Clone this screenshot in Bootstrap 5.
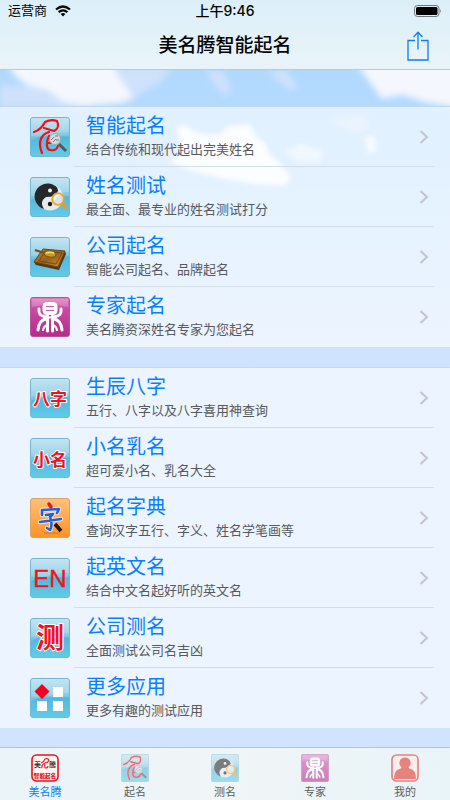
<!DOCTYPE html>
<html lang="zh-CN">
<head>
<meta charset="utf-8">
<meta name="viewport" content="width=device-width, initial-scale=1">
<title>美名腾智能起名</title>
<link href="https://cdn.jsdelivr.net/npm/bootstrap@5.3.0/dist/css/bootstrap.min.css" rel="stylesheet">
<style>
  body {
    font-family: "Liberation Sans", "Noto Sans CJK SC", sans-serif;
    background: linear-gradient(#add7fd 0, #b4dbff 130px, #c4e1ff 240px, #cfe3ff 340px, #d0e4ff 100%);
  }
  .sky { top: 0; left: 0; z-index: 0; height: 270px; pointer-events: none; }
  .app { z-index: 1; }
  .topbar { background: linear-gradient(#dceff8, #e9f4f9); border-bottom: 1px solid #b9cbd6; color: #030303; }
  .status { height: 22px; font-size: 13px; line-height: 22px; }
  .clock { font-family: Inter, "Noto Sans CJK SC", sans-serif; font-weight: 500; font-size: 14px; }
  .titlebar { height: 47px; }
  .titlebar h1 { font-size: 19px; line-height: 47px; font-weight: 500; }
  .share { width: 24px; height: 32px; color: #0a7cff; }
  .menu-group { background: rgba(255, 255, 255, .6); border-top: 1px solid #c3d8ea; margin-top: 20px; }
  .menu-group:first-child { margin-top: 36px; }
  .menu-row { padding-left: 30px; height: 60px; }
  .menu-row svg.tile { width: 40px; height: 40px; }
  .menu-body { margin: 0 16px 0 4px; padding: 0 5px 0 12px; border-bottom: 1px solid #d2dfe9; }
  li:last-child .menu-body { border-bottom-color: transparent; }
  .menu-title { font-size: 20px; line-height: 26px; color: #087fff; }
  .menu-note { font-size: 13px; line-height: 22px; color: #58595b; }
  .chevron { width: 10px; height: 16px; }
  .tabbar { background: linear-gradient(90deg, #eaf4f9, #f0f5f6 50%, #e9f4f9); border-top: 1px solid #b3c4d4; height: 53px; }
  .tab { font-size: 11px; line-height: 16px; color: #5c6063; padding-top: 6px; gap: 2px; }
  .tab svg { width: 28px; height: 28px; }
  .tab.active { color: #087fff; }
  .dim { opacity: .58; }
</style>
</head>
<body>
<svg width="0" height="0" class="position-absolute" aria-hidden="true">
  <defs>
    <linearGradient id="blue" x2="0" y2="1"><stop offset="0" stop-color="#b9dfef"/><stop offset=".45" stop-color="#83c9e3"/><stop offset=".5" stop-color="#55b6dc"/><stop offset="1" stop-color="#62cbe9"/></linearGradient>
    <linearGradient id="pink" x2="0" y2="1"><stop offset="0" stop-color="#df82c2"/><stop offset=".3" stop-color="#c94aa5"/><stop offset="1" stop-color="#b52b8c"/></linearGradient>
    <linearGradient id="orange" x2="0" y2="1"><stop offset="0" stop-color="#ffc07a"/><stop offset="1" stop-color="#ff9224"/></linearGradient>
    <linearGradient id="wood" x2="1" y2="1"><stop offset="0" stop-color="#bb853c"/><stop offset=".5" stop-color="#986020"/><stop offset="1" stop-color="#d5942d"/></linearGradient>
    <symbol id="base" viewBox="0 0 40 40">
      <rect x=".5" y=".5" width="39" height="39" rx="2.5" fill="url(#blue)" stroke="#75b6d3"/>
      <path d="M1 3Q1 1 3 1H37Q39 1 39 3V15Q20 15 1 23Z" fill="#fff" opacity=".18"/>
    </symbol>
    <symbol id="ming" viewBox="0 0 40 40">
      <use href="#base"/>
      <path d="M4 15C10 13 13 9 15 5C19 3 24 3 27 4C29 8 28 12 24 14L14 11M19 15C12 17 7 24 12 36M19 19C16 25 16 32 20 33C24 34 27 32 28 29M18 26H24" fill="none" stroke="#fb0b10" stroke-width="2.2" stroke-linecap="round" stroke-linejoin="round"/>
      <path d="M29 27L36 34" stroke="#55585b" stroke-width="3"/>
      <circle cx="25" cy="22" r="5.500" fill="#d2dbe0" stroke="#a4aaae"/>
      <path d="M21 23L24 20M23 25L26 22M25 19H28M26 23H29" stroke="#77777c"/>
    </symbol>
    <symbol id="taiji" viewBox="0 0 40 40">
      <use href="#base"/>
      <circle cx="20" cy="20.500" r="13" fill="#e5ebed"/>
      <path d="M24 8.200A13 13 0 1 0 14 32Q9 25 16 20Q26 20 28 14Q28 10 24 8.200Z" fill="#252728"/>
      <circle cx="20" cy="13.500" r="2" fill="#f5f5f5"/>
      <circle cx="20" cy="27" r="2.200" fill="#161819"/>
      <path d="M32 26L37 31.500" stroke="#f19a18" stroke-width="3.200"/>
      <circle cx="28" cy="22" r="5.800" fill="#dce3e5" stroke="#f4a127" stroke-width="1.800"/>
      <path d="M24.500 23Q25 19 28.500 18.500" fill="none" stroke="#fff" stroke-width="1.500"/>
    </symbol>
    <symbol id="compass" viewBox="0 0 40 40">
      <use href="#base"/>
      <path d="M4 25L6 28L29 33L36 17L35 14Z" fill="#573610"/>
      <path d="M4 25L13 12L35 14L28 30Z" fill="url(#wood)" stroke="#6b4414"/>
      <path d="M9 24L15 14L32 16L26 27Z" fill="none" stroke="#67400f" stroke-width=".8"/>
      <path d="M5 13Q10 15 16 16" fill="none" stroke="#6b541d" stroke-width="2"/>
      <ellipse cx="20" cy="17" rx="6" ry="3" fill="#c79b25" stroke="#79560d" transform="rotate(8 20 17)"/>
      <path d="M16 16Q20 14.500 24 16" stroke="#f5dc73" stroke-width="1.500" fill="none"/>
    </symbol>
    <symbol id="ding" viewBox="0 0 40 40">
      <rect x=".5" y=".5" width="39" height="39" rx="2.500" fill="url(#pink)" stroke="#b5559b"/>
      <path d="M2 2H38V10Q20 5 2 10Z" fill="#fff" opacity=".18"/>
      <rect x="12.500" y="5" width="15" height="13" rx="4.500" fill="#fff"/>
      <path d="M16 9.500H24M16 13.500H24" stroke="#c45aa9" stroke-width="1.100"/>
      <path d="M9 12Q8 19 15 19.500M31 12Q32 19 25 19.500M17.500 19V34M22.500 19V34M16 22Q9 23 8 33M24 22Q31 23 32 33" fill="none" stroke="#fff" stroke-width="3" stroke-linecap="round"/>
      <path d="M17 28Q13 30 13 34M23 28Q27 30 27 34M13 20.500H27" fill="none" stroke="#fff" stroke-width="2"/>
    </symbol>
    <symbol id="zidian" viewBox="0 0 40 40">
      <rect x=".5" y=".5" width="39" height="39" rx="2.500" fill="url(#orange)" stroke="#d9a267"/>
      <g fill="none" stroke-linecap="round" stroke-linejoin="round">
        <g stroke="#ffe9cc" stroke-width="4.500"><path d="M12 17L12 12L29 11L27 15M16 17L23 16L20 19M10 24L31 21M20 19Q23 27 20 32L17 30"/></g>
        <path d="M19 6L21 9" stroke="#e11b1b" stroke-width="3.500"/>
        <path d="M12 17L12 12L29 11L27 15M16 17L23 16L20 19M10 24L31 21M20 19Q23 27 20 32L17 30" stroke="#1e62e2" stroke-width="2.600"/>
      </g>
      <path d="M14 35H30" stroke="#b36614" opacity=".6"/>
      <path d="M25 26L31 33" stroke="#1b1613" stroke-width="3.800"/>
    </symbol>
    <symbol id="apps" viewBox="0 0 40 40">
      <use href="#base"/>
      <path d="M12 6L19.500 13.500L12 21L4.500 13.500Z" fill="#f3001c"/>
      <path d="M23 9H33V19H23ZM7 23H17V33H7ZM23 23H33V33H23Z" fill="#fff"/>
    </symbol>
    <symbol id="brand" viewBox="0 0 28 28">
      <rect x="1" y="1" width="26" height="26" rx="4.500" fill="#fff5f3" stroke="#ec1118" stroke-width="1.600"/>
      <text x="3" y="13" font-size="7" font-weight="500" fill="#262020">美</text>
      <text x="18" y="13" font-size="7" font-weight="500" fill="#262020">騰</text>
      <path d="M10 9Q13 8 14 5Q17 4 18 6Q17 9 14 9M14 9Q10 11 11 14M14 10Q13 14 15 14Q17 14 17 12" fill="none" stroke="#ed1c24" stroke-width="1.100"/>
      <text x="14" y="23.500" text-anchor="middle" font-size="5.600" font-weight="900" fill="#df1820">智能起名</text>
    </symbol>
    <symbol id="person" viewBox="0 0 28 28">
      <rect x="1" y="1" width="26" height="26" rx="4.500" fill="#fbeeed" stroke="#e58380" stroke-width="1.700"/>
      <path d="M14 3.500A5.600 5.600 0 0 1 17.500 13.500Q18 15 21 15.500Q25 17 25 25H3Q3 17 7 15.500Q10 15 10.500 13.500A5.600 5.600 0 0 1 14 3.500Z" fill="#e8827f"/>
    </symbol>
    <symbol id="chev" viewBox="0 0 10 16"><path d="M1.500 2L8 8L1.500 14" fill="none" stroke="#c3c5ca" stroke-width="2"/></symbol>
    <filter id="soft" x="-20%" y="-20%" width="140%" height="140%"><feGaussianBlur stdDeviation="3"/></filter>
    <filter id="edge" x="-20%" y="-20%" width="140%" height="140%"><feGaussianBlur stdDeviation="2"/></filter>
  </defs>
</svg>

<svg class="sky position-absolute w-100" viewBox="0 0 450 270" preserveAspectRatio="none" aria-hidden="true">
  <g fill="#d9e4fb" filter="url(#soft)" opacity=".75">
    <path d="M0 85L30 86L65 100H90V107H0ZM115 68H172L160 83L146 90L130 102L120 98ZM206 70L224 72L231 89L225 97L215 86ZM268 72L286 70L298 87L290 91Z"/>
    <path d="M325 120L350 117L366 115L369 130L352 132L345 128Z"/>
  </g>
  <g fill="#f4f7fd" filter="url(#soft)">
    <path d="M6 60L112 60L119 76L133 96L122 103L84 106L62 102L48 92L28 86L15 76Z"/>
    <path d="M354 60H458V108L425 102L402 95L382 99L374 88Z"/>
  </g>
  <g fill="#fff" filter="url(#edge)">
    <path d="M177 128L184 124L196 133L218 135L228 126L250 124L257 137L266 144L269 153L279 162L291 178L283 186L255 184L220 178L188 170L171 162L180 147Z" opacity=".85"/>
    <path d="M285 151L300 143L323 151L320 162L296 161Z" opacity=".45"/>
    <path d="M365 136L375 137L376 151L368 153Z" opacity=".7"/>
  </g>
</svg>

<div class="app position-relative d-flex flex-column min-vh-100">
  <header class="topbar">
    <div class="status row g-0 px-2">
      <div class="col d-flex align-items-center gap-2">
        <span>运营商</span>
        <svg width="16" height="12" viewBox="0 0 16 12" aria-label="Wi-Fi"><g fill="none" stroke="#080808" stroke-width="2.200"><path d="M1 4.500Q8-1.500 15 4.500M3.600 7.200Q8 3.500 12.400 7.200"/></g><path d="M5.600 9Q8 7 10.400 9L8 11.500Z" fill="#080808"/></svg>
      </div>
      <div class="col-auto clock">上午9:46</div>
      <div class="col d-flex justify-content-end align-items-center">
        <svg width="28" height="12" viewBox="0 0 28 12" aria-label="电量"><rect x=".5" y=".5" width="24.500" height="11" rx="3" fill="none" stroke="#6e777c"/><rect x="2" y="2" width="21.500" height="8" rx="1.500"/><path d="M26.200 4Q28 6 26.200 8Z" fill="#6e777c"/></svg>
      </div>
    </div>
    <div class="titlebar row g-0 align-items-center">
      <div class="col ps-3"></div>
      <h1 class="col-auto mb-0">美名腾智能起名</h1>
      <div class="col d-flex justify-content-end pe-3">
        <button type="button" class="share btn p-0 border-0 me-1 d-flex" aria-label="分享">
          <svg width="24" height="32" viewBox="0 0 24 32" fill="none" stroke="currentColor" stroke-width="1.300"><path d="M9 10.500H2V30H22V10.500H15M12 19.500V2.500M7.500 7L12 2.300L16.500 7"/></svg>
        </button>
      </div>
    </div>
  </header>

  <main>
    <ul class="menu-group list-unstyled mb-0">
      <li><a href="#" class="menu-row d-flex align-items-center text-decoration-none"><svg class="tile flex-shrink-0" aria-hidden="true"><use href="#ming"/></svg><span class="menu-body d-flex flex-grow-1 h-100 align-items-center"><span class="flex-grow-1"><span class="menu-title d-block">智能起名</span><span class="menu-note d-block">结合传统和现代起出完美姓名</span></span><svg class="chevron"><use href="#chev"/></svg></span></a></li>
      <li><a href="#" class="menu-row d-flex align-items-center text-decoration-none"><svg class="tile flex-shrink-0" aria-hidden="true"><use href="#taiji"/></svg><span class="menu-body d-flex flex-grow-1 h-100 align-items-center"><span class="flex-grow-1"><span class="menu-title d-block">姓名测试</span><span class="menu-note d-block">最全面、最专业的姓名测试打分</span></span><svg class="chevron"><use href="#chev"/></svg></span></a></li>
      <li><a href="#" class="menu-row d-flex align-items-center text-decoration-none"><svg class="tile flex-shrink-0" aria-hidden="true"><use href="#compass"/></svg><span class="menu-body d-flex flex-grow-1 h-100 align-items-center"><span class="flex-grow-1"><span class="menu-title d-block">公司起名</span><span class="menu-note d-block">智能公司起名、品牌起名</span></span><svg class="chevron"><use href="#chev"/></svg></span></a></li>
      <li><a href="#" class="menu-row d-flex align-items-center text-decoration-none"><svg class="tile flex-shrink-0" aria-hidden="true"><use href="#ding"/></svg><span class="menu-body d-flex flex-grow-1 h-100 align-items-center"><span class="flex-grow-1"><span class="menu-title d-block">专家起名</span><span class="menu-note d-block">美名腾资深姓名专家为您起名</span></span><svg class="chevron"><use href="#chev"/></svg></span></a></li>
    </ul>

    <ul class="menu-group list-unstyled mb-0">
      <li><a href="#" class="menu-row d-flex align-items-center text-decoration-none"><svg class="tile flex-shrink-0" viewBox="0 0 40 40" aria-hidden="true"><use href="#base"/><text x="20" y="27" text-anchor="middle" font-size="17" font-weight="700" fill="#f5101c" stroke="#fff" stroke-width="2" stroke-linejoin="round" paint-order="stroke">八字</text></svg><span class="menu-body d-flex flex-grow-1 h-100 align-items-center"><span class="flex-grow-1"><span class="menu-title d-block">生辰八字</span><span class="menu-note d-block">五行、八字以及八字喜用神查询</span></span><svg class="chevron"><use href="#chev"/></svg></span></a></li>
      <li><a href="#" class="menu-row d-flex align-items-center text-decoration-none"><svg class="tile flex-shrink-0" viewBox="0 0 40 40" aria-hidden="true"><use href="#base"/><text x="20" y="28" text-anchor="middle" font-size="17" font-weight="700" fill="#f5101c" stroke="#fff" stroke-width="2" stroke-linejoin="round" paint-order="stroke">小名</text></svg><span class="menu-body d-flex flex-grow-1 h-100 align-items-center"><span class="flex-grow-1"><span class="menu-title d-block">小名乳名</span><span class="menu-note d-block">超可爱小名、乳名大全</span></span><svg class="chevron"><use href="#chev"/></svg></span></a></li>
      <li><a href="#" class="menu-row d-flex align-items-center text-decoration-none"><svg class="tile flex-shrink-0" aria-hidden="true"><use href="#zidian"/></svg><span class="menu-body d-flex flex-grow-1 h-100 align-items-center"><span class="flex-grow-1"><span class="menu-title d-block">起名字典</span><span class="menu-note d-block">查询汉字五行、字义、姓名学笔画等</span></span><svg class="chevron"><use href="#chev"/></svg></span></a></li>
      <li><a href="#" class="menu-row d-flex align-items-center text-decoration-none"><svg class="tile flex-shrink-0" viewBox="0 0 40 40" aria-hidden="true"><use href="#base"/><text x="20" y="29" text-anchor="middle" font-size="24" fill="#ee1420" stroke="#ee1420" stroke-width=".4">EN</text></svg><span class="menu-body d-flex flex-grow-1 h-100 align-items-center"><span class="flex-grow-1"><span class="menu-title d-block">起英文名</span><span class="menu-note d-block">结合中文名起好听的英文名</span></span><svg class="chevron"><use href="#chev"/></svg></span></a></li>
      <li><a href="#" class="menu-row d-flex align-items-center text-decoration-none"><svg class="tile flex-shrink-0" viewBox="0 0 40 40" aria-hidden="true"><use href="#base"/><text x="20" y="30" text-anchor="middle" font-size="28" font-weight="700" fill="#f5101c" stroke="#fff" stroke-width="2" stroke-linejoin="round" paint-order="stroke">测</text></svg><span class="menu-body d-flex flex-grow-1 h-100 align-items-center"><span class="flex-grow-1"><span class="menu-title d-block">公司测名</span><span class="menu-note d-block">全面测试公司名吉凶</span></span><svg class="chevron"><use href="#chev"/></svg></span></a></li>
      <li><a href="#" class="menu-row d-flex align-items-center text-decoration-none"><svg class="tile flex-shrink-0" aria-hidden="true"><use href="#apps"/></svg><span class="menu-body d-flex flex-grow-1 h-100 align-items-center"><span class="flex-grow-1"><span class="menu-title d-block">更多应用</span><span class="menu-note d-block">更多有趣的测试应用</span></span><svg class="chevron"><use href="#chev"/></svg></span></a></li>
    </ul>
  </main>

  <nav class="tabbar nav nav-justified sticky-bottom mt-auto flex-nowrap" aria-label="主导航">
    <a href="#" class="tab active nav-item d-flex flex-column align-items-center text-decoration-none" aria-current="page"><svg aria-hidden="true"><use href="#brand"/></svg>美名腾</a>
    <a href="#" class="tab nav-item d-flex flex-column align-items-center text-decoration-none"><svg class="dim" aria-hidden="true"><use href="#ming"/></svg>起名</a>
    <a href="#" class="tab nav-item d-flex flex-column align-items-center text-decoration-none"><svg class="dim" aria-hidden="true"><use href="#taiji"/></svg>测名</a>
    <a href="#" class="tab nav-item d-flex flex-column align-items-center text-decoration-none"><svg class="dim" aria-hidden="true"><use href="#ding"/></svg>专家</a>
    <a href="#" class="tab nav-item d-flex flex-column align-items-center text-decoration-none"><svg aria-hidden="true"><use href="#person"/></svg>我的</a>
  </nav>
</div>
<script src="https://cdn.jsdelivr.net/npm/bootstrap@5.3.0/dist/js/bootstrap.bundle.min.js"></script>
</body>
</html>
